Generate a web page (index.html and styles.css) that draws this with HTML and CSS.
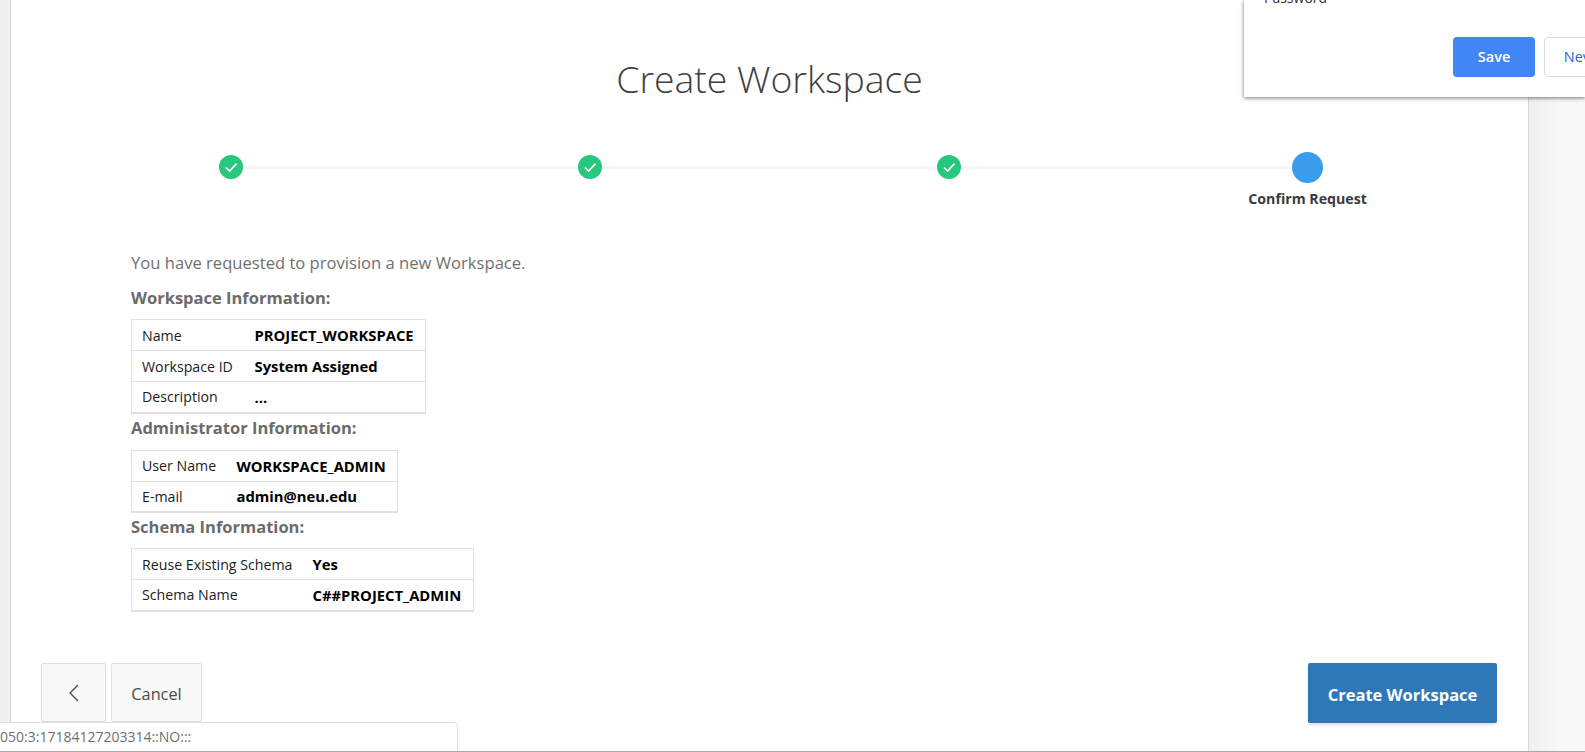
FILE: index.html
```html
<!DOCTYPE html>
<html lang="en">
<head>
<meta charset="utf-8">
<title>Create Workspace</title>
<link rel="stylesheet" href="styles.css">
</head>
<body>
<div class="page">
  <div class="gutter gutter-left"></div>
  <main class="card">
    <h1 class="title">Create Workspace</h1>
    <ol class="steps">
      <li class="step step-done"><span class="dot dot-done"><svg class="check" viewBox="0 0 24 24"><path d="M7 12.5l3.6 3.6L17.5 8.6"/></svg></span></li>
      <li class="step step-done"><span class="dot dot-done"><svg class="check" viewBox="0 0 24 24"><path d="M7 12.5l3.6 3.6L17.5 8.6"/></svg></span></li>
      <li class="step step-done"><span class="dot dot-done"><svg class="check" viewBox="0 0 24 24"><path d="M7 12.5l3.6 3.6L17.5 8.6"/></svg></span></li>
      <li class="step step-current"><span class="dot dot-current"></span><span class="step-label">Confirm Request</span></li>
    </ol>
    <section class="summary">
      <p class="intro">You have requested to provision a new Workspace.</p>
      <h2 class="section-head section-head-first">Workspace Information:</h2>
      <table class="info info-workspace">
        <tr><th>Name</th><td>PROJECT_WORKSPACE</td></tr>
        <tr><th>Workspace ID</th><td>System Assigned</td></tr>
        <tr><th>Description</th><td>...</td></tr>
      </table>
      <h2 class="section-head">Administrator Information:</h2>
      <table class="info info-admin">
        <tr><th>User Name</th><td>WORKSPACE_ADMIN</td></tr>
        <tr><th>E-mail</th><td>admin@neu.edu</td></tr>
      </table>
      <h2 class="section-head section-head-schema">Schema Information:</h2>
      <table class="info info-schema">
        <tr><th>Reuse Existing Schema</th><td>Yes</td></tr>
        <tr><th>Schema Name</th><td>C##PROJECT_ADMIN</td></tr>
      </table>
    </section>
    <footer class="actions">
      <div class="actions-left">
        <button class="btn btn-back" aria-label="Back"><svg class="chevron" viewBox="0 0 14 20"><path d="M11 2L3 10l8 8"/></svg></button>
        <button class="btn btn-cancel">Cancel</button>
      </div>
      <button class="btn-primary">Create Workspace</button>
    </footer>
  </main>
  <div class="gutter gutter-right"></div>
</div>
<aside class="popup">
  <div class="popup-field">Password</div>
  <div class="popup-buttons">
    <button class="popup-save">Save</button>
    <button class="popup-never">Never</button>
  </div>
</aside>
<div class="status-url">050:3:17184127203314::NO:::</div>
</body>
</html>
```
FILE: styles.css
```css
* { box-sizing: border-box; }
html, body { margin: 0; height: 752px; overflow: hidden; }
body {
  font-family: "Open Sans", "Noto Sans", "Liberation Sans", sans-serif;
  background: #fff;
  position: relative;
}
.page {
  display: flex;
  height: 751px;
}
body::after {
  content: "";
  position: absolute;
  left: 0; right: 0; bottom: 0;
  height: 1px;
  background: #a9a9a9;
}
.gutter { flex: none; }
.gutter-left {
  width: 11px;
  background: #f0f0f0;
  border-right: 1px solid #d9d9d9;
}
.gutter-right {
  flex: 1;
  background: linear-gradient(to right, #efefef, #f8f8f8 30px);
  border-left: 1px solid #d9d9d9;
}
.card {
  flex: none;
  width: 1517px;
  background: #fff;
  display: flex;
  flex-direction: column;
}
.title {
  margin: 52px 0 0;
  height: 54px;
  line-height: 54px;
  text-align: center;
  font-size: 37.4px;
  font-weight: 300;
  color: #3f3f3f;
}
.steps {
  list-style: none;
  margin: 46px 0 0;
  padding: 0 41px;
  display: grid;
  grid-template-columns: repeat(4, 1fr);
  height: 64px;
}
.step {
  position: relative;
  display: flex;
  flex-direction: column;
  align-items: center;
}
.step-done::before {
  content: "";
  position: absolute;
  top: 14px;
  left: 50%;
  width: 100%;
  height: 3px;
  background: #f6f6f6;
}
.dot {
  position: relative;
  border-radius: 50%;
  display: block;
}
.dot-done {
  width: 24px;
  height: 24px;
  margin-top: 3px;
  background: #27c77e;
}
.dot-current {
  width: 31px;
  height: 31px;
  background: #3a9cec;
}
.check {
  display: block;
  width: 24px;
  height: 24px;
  fill: none;
  stroke: #fff;
  stroke-width: 1.7;
}
.step-label {
  margin-top: 5px;
  font-size: 14.2px;
  line-height: 22px;
  font-weight: 700;
  color: #3a3a3a;
  white-space: nowrap;
}
.summary {
  padding-left: 120px;
  margin-top: 35px;
}
.intro {
  margin: 0;
  font-size: 16.6px;
  line-height: 24px;
  color: #707070;
}
.section-head {
  margin: 2px 0 10px;
  font-size: 16.5px;
  line-height: 24px;
  font-weight: 700;
  color: #6b6b6b;
}
.section-head-first { margin: 11px 0 9px; }
.section-head-schema { margin: 2px 0 9px; }
.info {
  border-collapse: collapse;
  table-layout: fixed;
  font-size: 14.2px;
  color: #1c1c1c;
  border: 1px solid #e0e0e0;
  border-bottom-width: 2px;
}
.info tr + tr { border-top: 1px solid #e0e0e0; }
.info th, .info td {
  height: 31px;
  padding: 0 0 0 11px;
  white-space: nowrap;
  text-align: left;
}
.info th { font-weight: 400; padding-left: 10px; }
.info td { font-weight: 700; color: #000; font-size: 14.8px; }
.info-workspace { width: 295px; }
.info-workspace th { width: 112px; }
.info-admin { width: 267px; }
.info-admin th { width: 94px; }
.info-schema { width: 343px; }
.info-schema th { width: 170px; }
.actions {
  margin-top: 51px;
  padding: 0 31px 0 30px;
  display: flex;
  justify-content: space-between;
  align-items: flex-start;
}
.actions-left { display: flex; gap: 5px; }
.btn {
  height: 59px;
  background: #f8f8f8;
  border: 1px solid #dedede;
  border-radius: 2px;
  font-family: inherit;
  color: #4a4a4a;
  padding: 0;
  display: flex;
  align-items: center;
  justify-content: center;
}
.btn-back { width: 65px; padding-top: 2px; }
.btn-cancel { width: 91px; font-size: 16.3px; padding-top: 4px; }
.chevron {
  width: 14px;
  height: 20px;
  fill: none;
  stroke: #4a4a4a;
  stroke-width: 1.3;
}
.btn-primary {
  width: 189px;
  height: 60px;
  padding: 4px 0 0;
  background: #2e78b8;
  border: 0;
  border-radius: 2px;
  color: #fff;
  font-family: inherit;
  font-size: 16.5px;
  font-weight: 700;
  box-shadow: 0 2px 3px rgba(0,0,0,.12);
}
.popup {
  position: absolute;
  top: 0;
  left: 1244px;
  width: 341px;
  height: 97px;
  background: #fff;
  box-shadow: 0 1px 4px rgba(0,0,0,.55);
  overflow: hidden;
  font-size: 14px;
}
.popup-field {
  margin: -12px 0 0 20px;
  height: 20px;
  line-height: 20px;
  color: #333;
}
.popup-buttons {
  display: flex;
  gap: 9px;
  margin: 29px 0 0 209px;
}
.popup-save, .popup-never {
  flex: none;
  height: 40px;
  padding: 0 0 2px;
  border-radius: 4px;
  font-family: inherit;
  font-size: 14.5px;
}
.popup-save {
  width: 82px;
  background: #4285f4;
  border: 0;
  color: #fff;
  font-weight: 600;
}
.popup-never {
  width: 82px;
  padding-right: 2px;
  background: #fff;
  border: 1px solid #dadce0;
  color: #1f66e0;
}
.status-url {
  position: absolute;
  left: 0;
  bottom: 1px;
  width: 458px;
  height: 29px;
  line-height: 28px;
  background: #fff;
  border: 1px solid #dedede;
  border-left: 0;
  border-bottom: 0;
  border-radius: 0 5px 0 0;
  font-size: 14px;
  color: #6f6f6f;
}
```
